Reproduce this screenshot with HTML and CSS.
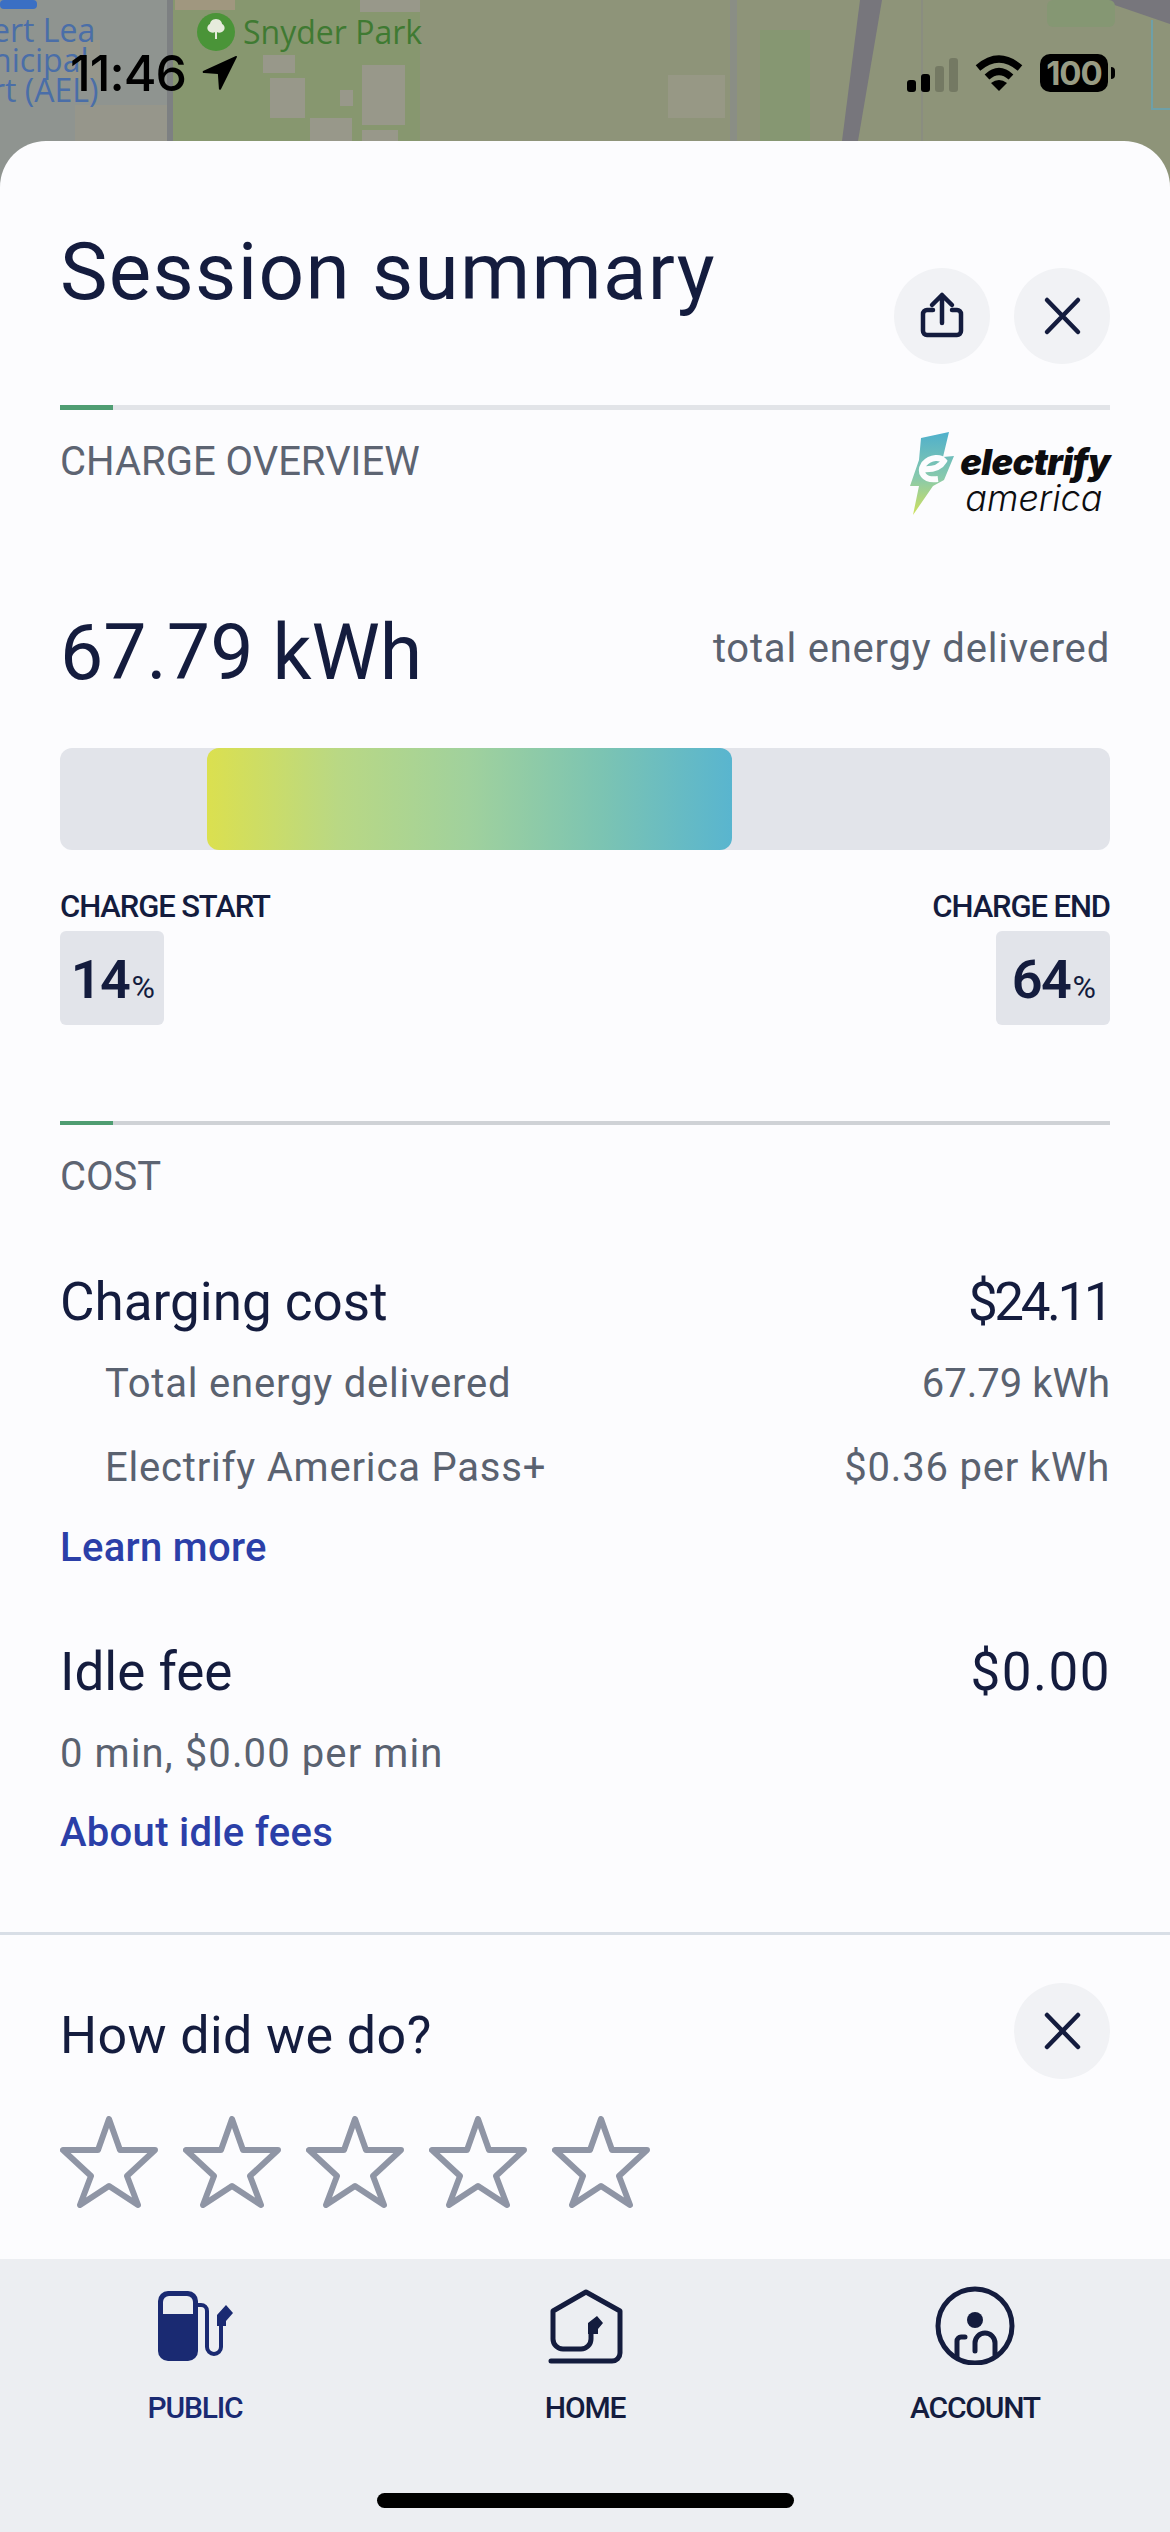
FILE: index.html

```html
<!DOCTYPE html>
<html lang="en">
<head>
  <meta charset="UTF-8">
  <meta name="viewport" content="width=device-width, initial-scale=1.0">
  <title>Session summary</title>
  <link rel="stylesheet" href="styles.css">
</head>
<body>
  <div class="phone">
    <!-- map behind the sheet -->
    <svg class="map" viewBox="0 0 1170 200" aria-hidden="true">
      <rect width="1170" height="200" fill="#8e9479"/>
      <rect width="170" height="200" fill="#8f9490"/>
      <rect x="170" width="250" height="200" fill="#87976f"/>
      <rect x="0" width="37" height="9" rx="4" fill="#3a6fc4"/>
      <rect x="175" width="60" height="10" fill="#a0977f"/>
      <rect x="75" y="105" width="92" height="95" fill="#96968b"/>
      <rect x="60" y="40" width="40" height="40" fill="#96968b"/>
      <rect x="167" width="6" height="200" fill="#7d8082"/>
      <rect x="263" y="55" width="32" height="18" fill="#98988a"/>
      <rect x="270" y="78" width="35" height="40" fill="#98988a"/>
      <rect x="340" y="90" width="13" height="16" fill="#98988a"/>
      <rect x="362" y="65" width="43" height="60" fill="#98988a"/>
      <rect x="310" y="118" width="42" height="30" fill="#98988a"/>
      <rect x="362" y="130" width="36" height="20" fill="#98988a"/>
      <rect x="360" width="60" height="12" fill="#98988a"/>
      <rect x="668" y="75" width="57" height="43" fill="#979885"/>
      <rect x="730" width="7" height="200" fill="#8a8e85"/>
      <rect x="760" y="30" width="50" height="170" fill="#869772"/>
      <polygon points="860,0 882,0 858,141 842,141" fill="#77767c"/>
      <rect x="921" width="2" height="200" fill="#8a8d80"/>
      <polygon points="1100,0 1170,0 1170,24" fill="#77767c"/>
      <rect x="1047" width="68" height="27" rx="6" fill="#859773"/>
      <path d="M1152 20V109H1170" fill="none" stroke="#6ea0a8" stroke-width="2"/>
      <text class="map-blue" x="-8" y="42">ert Lea</text>
      <text class="map-blue" x="-8" y="72">nicipal</text>
      <text class="map-blue" x="-8" y="102">rt (AEL)</text>
      <circle cx="216" cy="32" r="19" fill="#4a9438"/>
      <path d="M216 19c-4 0-6 3-6 5-3 1-4 6 0 8 2 1 4 1 5 0v7h2v-7c1 1 3 1 5 0 4-2 3-7 0-8 0-2-2-5-6-5z" fill="#e6ebdc"/>
      <text class="map-green" x="243" y="44">Snyder Park</text>
    </svg>

    <header class="status">
      <div class="status-left">
        <span class="clock">11:46</span>
        <svg class="locator" viewBox="0 0 34 34"><path d="M32 1 1 15c-1 1 0 2 1 2l13 1 1 14c0 1 2 1 2 0L33 2c0-1 0-1-1-1z"/></svg>
      </div>
      <div class="status-right">
        <svg class="signal" viewBox="0 0 51 34">
          <rect y="22" width="9" height="12" rx="3"/>
          <rect x="14" y="16" width="9" height="18" rx="3"/>
          <rect class="faded" x="28" y="8" width="9" height="26" rx="3"/>
          <rect class="faded" x="42" width="9" height="34" rx="3"/>
        </svg>
        <svg class="wifi" viewBox="0 0 48 36">
          <path d="M3 13Q24-5 45 13" fill="none" stroke="#000" stroke-width="7"/>
          <path d="M12 22Q24 11 36 22" fill="none" stroke="#000" stroke-width="7"/>
          <path d="M24 36 16 28Q24 22 32 28Z"/>
        </svg>
        <div class="battery"><span class="battery-level">100</span><span class="battery-tip"></span></div>
      </div>
    </header>

    <main class="sheet">
      <div class="sheet-head">
        <h1>Session summary</h1>
        <div class="sheet-actions">
          <button class="round-btn" aria-label="Share">
            <svg viewBox="0 0 96 96"><path d="M48 55V27M38 37 48 27 58 37M39 42H33a4 4 0 0 0-4 4V63a4 4 0 0 0 4 4H63a4 4 0 0 0 4-4V46a4 4 0 0 0-4-4H58"/></svg>
          </button>
          <button class="round-btn" aria-label="Close">
            <svg viewBox="0 0 96 96"><path d="M33 32 64 64M64 32 33 64"/></svg>
          </button>
        </div>
      </div>

      <section class="pad">
        <div class="rule"><span></span></div>
        <div class="overview-head">
          <div class="section-label">CHARGE OVERVIEW</div>
          <div class="logo">
            <svg class="logo-bolt" viewBox="0 0 48 85">
              <defs>
                <linearGradient id="bolt" x1="0" y1="0" x2="0" y2="1">
                  <stop offset="0" stop-color="#4fb0cc"/>
                  <stop offset="0.55" stop-color="#88c9ac"/>
                  <stop offset="1" stop-color="#cfe05c"/>
                </linearGradient>
              </defs>
              <path d="M15 8 43 2 37 27 48 26 38 50 27 56 7 85 13 56 4 56 13 30Z" fill="url(#bolt)"/>
              <path d="M15 39C25 40 34 38 38 31 35 27 25 26 18 34 13 42 17 51 32 49" fill="none" stroke="#fcfcfe" stroke-width="6"/>
            </svg>
            <div class="logo-text">
              <span class="logo-top">electrify</span>
              <span class="logo-bottom">america</span>
            </div>
          </div>
        </div>

        <div class="energy-row">
          <div class="energy-value">67.79 kWh</div>
          <div class="energy-note">total energy delivered</div>
        </div>

        <div class="charge-bar"><div class="charge-fill"></div></div>

        <div class="charge-ends">
          <div class="charge-end">
            <div class="charge-label">CHARGE START</div>
            <div class="charge-chip">14<small>%</small></div>
          </div>
          <div class="charge-end right">
            <div class="charge-label">CHARGE END</div>
            <div class="charge-chip wide">64<small>%</small></div>
          </div>
        </div>

        <div class="rule dark"><span></span></div>
        <div class="section-label cost-label">COST</div>

        <div class="cost-row first">
          <span class="cost-name">Charging cost</span>
          <span class="cost-name narrow-num">$24.11</span>
        </div>
        <div class="detail-row one">
          <span>Total energy delivered</span>
          <span class="plain-num">67.79 kWh</span>
        </div>
        <div class="detail-row two">
          <span>Electrify America Pass+</span>
          <span>$0.36 per kWh</span>
        </div>
        <a class="more-link one" href="#">Learn more</a>

        <div class="cost-row second">
          <span class="cost-name">Idle fee</span>
          <span class="cost-name wide-num">$0.00</span>
        </div>
        <div class="detail-row flush">
          <span>0 min, $0.00 per min</span>
        </div>
        <a class="more-link two" href="#">About idle fees</a>
      </section>

      <section class="feedback">
        <div class="feedback-head">
          <h2>How did we do?</h2>
          <button class="round-btn" aria-label="Dismiss">
            <svg viewBox="0 0 96 96"><path d="M33 32 64 64M64 32 33 64"/></svg>
          </button>
        </div>
        <div class="stars">
          <svg class="star" viewBox="0 0 98 92"><polygon points="49,3 60,34 95,34 67,60 78,89 49,70 20,89 31,60 3,34 38,34"/></svg>
          <svg class="star" viewBox="0 0 98 92"><polygon points="49,3 60,34 95,34 67,60 78,89 49,70 20,89 31,60 3,34 38,34"/></svg>
          <svg class="star" viewBox="0 0 98 92"><polygon points="49,3 60,34 95,34 67,60 78,89 49,70 20,89 31,60 3,34 38,34"/></svg>
          <svg class="star" viewBox="0 0 98 92"><polygon points="49,3 60,34 95,34 67,60 78,89 49,70 20,89 31,60 3,34 38,34"/></svg>
          <svg class="star" viewBox="0 0 98 92"><polygon points="49,3 60,34 95,34 67,60 78,89 49,70 20,89 31,60 3,34 38,34"/></svg>
        </div>
      </section>
    </main>

    <nav class="tabs">
      <div class="tab-list">
        <a class="tab active" href="#">
          <svg viewBox="0 0 80 80">
            <rect x="3" y="6" width="40" height="70" rx="10" fill="#1a2a72"/>
            <path d="M8 29V17a6 6 0 0 1 6-6H32a6 6 0 0 1 6 6V29Z" fill="#eceef2"/>
            <path d="M43 20H46a6 6 0 0 1 6 6V62a7 7 0 0 0 14 0V40" fill="none" stroke="#1a2a72" stroke-width="4"/>
            <path d="M62 41V30L71 20 78 28 71 36V41Z" fill="#1a2a72"/>
          </svg>
          <span>PUBLIC</span>
        </a>
        <a class="tab" href="#">
          <svg viewBox="0 0 80 80">
            <path d="M6 76H67a8 8 0 0 0 8-8V26L41 7 8 26V54a10 10 0 0 0 10 10H36a10 10 0 0 0 10-10V48" fill="none" stroke="#141c3e" stroke-width="5" stroke-linecap="round" stroke-linejoin="round"/>
            <path d="M43 49V38L52 31 58 38 53 44V49Z" fill="#141c3e"/>
          </svg>
          <span>HOME</span>
        </a>
        <a class="tab" href="#">
          <svg viewBox="0 0 80 80">
            <circle cx="40" cy="41" r="37" fill="none" stroke="#141c3e" stroke-width="5"/>
            <circle cx="40" cy="35" r="8" fill="#141c3e"/>
            <path d="M22 72V56a4 4 0 0 1 4-4H30M40 66V58a10 10 0 0 1 20 0V70" fill="none" stroke="#141c3e" stroke-width="5" stroke-linecap="round"/>
          </svg>
          <span>ACCOUNT</span>
        </a>
      </div>
      <div class="home-bar"></div>
    </nav>
  </div>
</body>
</html>
```

FILE: styles.css

```css
* { box-sizing: border-box; }
html, body { margin: 0; padding: 0; }
body { font-family: Roboto, 'Noto Sans', sans-serif; color: #141c3e; }
h1, h2 { margin: 0; font-weight: 400; }
a { text-decoration: none; }

.phone { position: relative; width: 1170px; height: 2532px; overflow: hidden; display: flex; flex-direction: column; }

/* map + status bar */
.map { position: absolute; top: 0; left: 0; width: 1170px; height: 200px; }
.map-blue { font: 500 32px 'Open Sans', sans-serif; fill: #4a6ea8; }
.map-green { font: 500 32px 'Open Sans', sans-serif; fill: #3f7a32; }
.status { position: relative; height: 141px; padding: 53px 62px 0 70px; display: flex; justify-content: space-between; align-items: flex-start; }
.status-left { display: flex; align-items: center; gap: 16px; height: 40px; }
.clock { font: 500 50px Inter, sans-serif; color: #000; letter-spacing: -1px; }
.locator { width: 36px; height: 36px; }
.status-right { display: flex; align-items: center; height: 40px; }
.signal { width: 51px; height: 34px; margin-top: 4px; margin-right: 17px; }
.faded { opacity: 0.18; }
.wifi { width: 48px; height: 36px; margin-right: 17px; }
.battery { position: relative; width: 68px; height: 38px; background: #000; border-radius: 10px; display: flex; align-items: center; justify-content: center; }
.battery-level { font: 700 33px Inter, sans-serif; color: #989c84; letter-spacing: -1px; }
.battery-tip { position: absolute; right: -7px; top: 13px; width: 4px; height: 12px; background: #000; border-radius: 0 4px 4px 0; }

/* sheet */
.sheet { position: relative; flex: 1; background: #fcfcfe; border-radius: 46px 46px 0 0; }
.pad { padding: 0 60px; }
.sheet-head { height: 264px; padding: 81px 60px 0; display: flex; justify-content: space-between; align-items: flex-start; }
h1 { font-size: 80px; line-height: 100px; letter-spacing: 1.3px; }
.sheet-actions { display: flex; gap: 24px; margin-top: 46px; }
.round-btn { width: 96px; height: 96px; padding: 0; border: none; border-radius: 50%; background: #f1f2f5; flex: none; }
.round-btn svg { display: block; width: 96px; height: 96px; fill: none; stroke: #141c3e; stroke-width: 4.5; stroke-linecap: round; stroke-linejoin: round; }

.rule { height: 5px; background: #e2e4e8; }
.rule span { display: block; width: 53px; height: 100%; background: #4f9d72; }
.rule.dark { height: 4px; margin-top: 96px; background: #cfd2d6; }

.section-label { font-size: 40px; line-height: 46px; color: #5d6472; margin-top: 9px; }
.overview-head { display: flex; justify-content: space-between; align-items: flex-start; padding-top: 20px; height: 105px; }
.cost-label { margin-top: 29px; }

.logo { display: flex; gap: 6px; }
.logo-bolt { width: 48px; height: 85px; }
.logo-text { display: flex; flex-direction: column; margin-top: 14px; }
.logo-top { font: italic 900 36px/36px Inter, sans-serif; color: #0d0d10; letter-spacing: -0.6px; }
.logo-bottom { font: italic 300 36px/36px Inter, sans-serif; color: #0d0d10; margin-left: 5px; }

.energy-row { display: flex; justify-content: space-between; align-items: center; height: 90px; margin-top: 90px; }
.energy-value { font-size: 77px; padding-top: 6px; }
.energy-note { font-size: 40px; color: #5a6270; letter-spacing: 0.8px; padding-bottom: 3px; }

.charge-bar { height: 102px; margin-top: 53px; background: #e2e4ea; border-radius: 12px; padding-left: 147px; }
.charge-fill { width: 525px; height: 100%; border-radius: 12px; background: linear-gradient(90deg, #dbe04f, #b9d884 25%, #a0d19d 50%, #7cc4b2 75%, #59b5cf); }

.charge-ends { display: flex; justify-content: space-between; margin-top: 39px; }
.charge-end { display: flex; flex-direction: column; align-items: flex-start; }
.charge-end.right { align-items: flex-end; }
.charge-label { font-size: 31px; line-height: 36px; font-weight: 500; letter-spacing: -1.1px; }
.charge-chip { width: 104px; height: 94px; margin-top: 6px; background: #e2e4ea; border-radius: 6px; font-size: 54px; font-weight: 600; display: flex; align-items: baseline; justify-content: center; line-height: 98px; letter-spacing: -1.5px; }
.charge-chip.wide { width: 114px; }
.charge-chip small { font-size: 32px; font-weight: 400; margin-left: 2px; }

.cost-row { display: flex; justify-content: space-between; height: 60px; line-height: 60px; }
.cost-row.first { margin-top: 72px; }
.cost-row.second { margin-top: 69px; }
.cost-name { font-size: 53px; }
.narrow-num { letter-spacing: -3.5px; }
.wide-num { letter-spacing: 1.5px; margin-right: -1px; }
.detail-row { display: flex; justify-content: space-between; height: 50px; line-height: 50px; font-size: 40px; color: #5a6270; padding-left: 45px; letter-spacing: 0.8px; }
.plain-num { letter-spacing: 0; }
.detail-row.one { margin-top: 27px; }
.detail-row.two { margin-top: 34px; }
.detail-row.flush { margin-top: 27px; padding-left: 0; letter-spacing: 1.1px; }
.more-link { display: block; height: 50px; line-height: 50px; font-size: 40px; font-weight: 500; color: #2b3fa8; letter-spacing: 0.3px; }
.more-link.one { margin-top: 30px; }
.more-link.two { margin-top: 29px; }

/* feedback */
.feedback { margin-top: 74px; border-top: 3px solid #d8dee6; padding: 48px 60px 0; }
.feedback-head { display: flex; justify-content: space-between; align-items: center; }
h2 { font-size: 52px; line-height: 60px; letter-spacing: 0.4px; padding-top: 10px; }
.stars { display: flex; gap: 25px; margin-top: 37px; }
.star { width: 98px; height: 92px; fill: none; stroke: #8f95a5; stroke-width: 6; stroke-linejoin: round; }

/* bottom tabs */
.tabs { height: 273px; background: #eceef2; padding-top: 26px; position: relative; }
.tab-list { display: grid; grid-template-columns: repeat(3, 390px); }
.tab { display: flex; flex-direction: column; align-items: center; color: #141c3e; font-size: 30px; font-weight: 500; line-height: 36px; letter-spacing: -1.2px; }
.tab svg { width: 80px; height: 80px; margin-bottom: 25px; }
.tab.active { color: #1a2a72; }
.home-bar { width: 417px; height: 15px; margin: 67px auto 0; background: #000; border-radius: 8px; }
```
